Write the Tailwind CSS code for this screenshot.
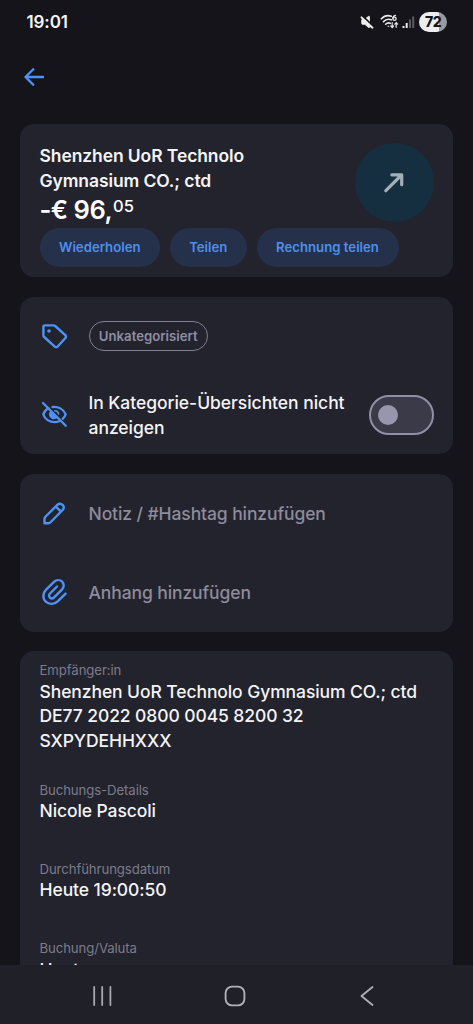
<!DOCTYPE html>
<html lang="de">
<head>
<meta charset="utf-8">
<meta name="viewport" content="width=device-width, initial-scale=1">
<title>Umsatzdetails</title>
<script src="https://cdn.jsdelivr.net/npm/@tailwindcss/browser@4"></script>
</head>
<body class="bg-[#15141a] font-['Inter',sans-serif] text-[#f4f4f6]">
<div class="flex h-[1024px] w-[473px] flex-col overflow-hidden">
  <!-- Status bar -->
  <header class="flex h-11 shrink-0 items-center justify-between pl-[26.500px] pr-[26px]">
    <span class="text-[17px] leading-none font-semibold tracking-[-0.100px]">19:01</span>
    <div class="flex items-center">
      <svg class="mr-[2px] h-[14px] w-[14px]" viewBox="0 0 16 16" fill="none"><path d="M2 5.300h2.600L9.800 1.600q1-.6 1 .5v11.800q0 1-1 .4L5.600 10.700H3Q2 10.700 2 9.700Z" fill="#eee" stroke="#eee"/><path d="M3.200 1.400 15.800 13.600" stroke="#15141a" stroke-width="2"/><path d="M1.700 2.700 14.200 14.500" stroke="#eee" stroke-width="2.200" stroke-linecap="round"/></svg>
      <svg class="ml-[4px] h-[16px] w-[20px]" viewBox="0 0 20 16" fill="none" stroke="#e8e8ea" stroke-width="1.600" stroke-linecap="round"><path d="M1.400 4.800C4 2 8 1.100 11.300 2.300M3.500 7.600C5.500 5.400 8.500 4.700 11.300 5.800M5.700 10.200C7 8.900 8.800 8.600 10.300 9.300"/><circle cx="8.400" cy="12.300" r=".8" fill="#e8e8ea" stroke="none"/><path d="M15.500 1.300C13.500 1.700 12.800 3 12.900 4.600" stroke-width="1.300"/><circle cx="14.500" cy="4.700" r="1.600" stroke-width="1.300"/><path d="M12.200 8.700v4.600M10.800 12l1.400 1.500 1.400-1.500M16.200 13.300V8.900M14.800 10.200l1.400-1.500 1.400 1.500" stroke-width="1.200"/></svg>
      <svg class="ml-[2px] h-[14px] w-[13px]" viewBox="0 0 13 14"><path d="M.5 11h2v2h-2zM3.700 8h2v5h-2z" fill="#e8e8ea"/><path d="M7 4.500h2V13H7zM10.200 1.500h2V13h-2z" fill="#5b5a60"/></svg>
      <div class="ml-[4px] flex h-[20px] w-[28px] items-center justify-center rounded-full bg-[linear-gradient(90deg,#ededef_72%,#9b9a9f_72%)] text-[14px] leading-none font-extrabold tracking-[-0.500px] text-[#15141a]">72</div>
    </div>
  </header>

  <!-- Top navigation -->
  <div class="flex h-[79.500px] shrink-0 items-start pt-[22.500px] pl-[24px]">
    <svg class="size-[20px]" viewBox="0 0 20 20" fill="none" stroke="#4d93f5" stroke-width="2.300" stroke-linecap="round" stroke-linejoin="round"><path d="M19.200 10H1.500M9.300 2.200 1.500 10l7.800 7.800"/></svg>
  </div>

  <main class="flex min-h-0 flex-1 flex-col gap-[19.700px] overflow-hidden px-[20px]">
    <!-- Payment summary -->
    <section class="flex h-[153.500px] shrink-0 flex-col rounded-[14px] bg-[#23232d] px-[19.500px] pt-[19.500px]">
      <div class="flex h-[85px] items-start justify-between">
        <div class="pt-[1px]">
          <h1 class="text-[17.500px] leading-[24.600px] font-semibold tracking-[-0.100px]"><span>Shenzhen UoR Technolo</span><br><span>Gymnasium CO.; ctd</span></h1>
          <p class="flex text-[25.500px] leading-[34px] font-semibold tracking-[-0.500px] text-white"><span>-€ 96,</span><span class="ml-[1px] text-[16.500px] leading-[26px] font-medium tracking-normal">05</span></p>
        </div>
        <div class="flex size-[79px] items-center justify-center rounded-full bg-[#152f40]">
          <svg class="size-[22px]" viewBox="0 0 22 22" fill="none" stroke="#a3aeb8" stroke-width="3.200" stroke-linecap="round" stroke-linejoin="round"><path d="M2.800 18.700 18.500 3M8.800 2.800h9.900v9.900"/></svg>
        </div>
      </div>
      <div class="flex gap-[9.500px] text-[13.200px] leading-none font-semibold text-[#4d8fec]">
        <button class="h-[39px] w-[120.500px] rounded-full bg-[#25304a]"><span>Wiederholen</span></button>
        <button class="h-[39px] w-[77.500px] rounded-full bg-[#25304a]"><span>Teilen</span></button>
        <button class="h-[39px] w-[142px] rounded-full bg-[#25304a]"><span>Rechnung teilen</span></button>
      </div>
    </section>

    <!-- Category -->
    <section class="flex h-[157.800px] shrink-0 flex-col rounded-[14px] bg-[#23232d] px-[19.500px]">
      <div class="flex h-[79px] items-center">
        <svg class="size-[29px]" viewBox="0 0 29 29" fill="none" stroke="#4d93f5" stroke-width="2.400" stroke-linejoin="round"><path d="M4.700 3.400H13.500q1 0 1.700.6L25.300 13.200q1.300 1.300.1 2.800L17.700 24.500q-1.400 1.400-2.900.1L4.200 15q-.8-.7-.8-1.700V4.700q0-1.300 1.300-1.300Z"/><circle cx="9" cy="9" r="1.800" fill="#4d93f5" stroke="none"/></svg>
        <span class="ml-[20px] flex h-[30px] w-[119.500px] items-center justify-center rounded-full border border-[#7f7f93] text-[13.200px] leading-none font-semibold text-[#8e8da3]"><span>Unkategorisiert</span></span>
      </div>
      <div class="flex h-[78px] items-center">
        <svg class="size-[29px]" viewBox="0 0 29 29" fill="none" stroke="#4d93f5" stroke-width="2.300" stroke-linecap="round"><path d="M8.600 8.300C6 9.400 4.100 11.600 3.300 14.400c1.700 4.900 6.300 7.800 11.300 7.800 1.700 0 3.300-.3 4.700-.9M12.500 7c5.800-.7 11 2.200 13.200 7.400-.7 1.700-1.700 3.200-3 4.400"/><path d="M10.200 10.900c-1.900 2.400-1.500 5.800 1.100 7.500 2 1.300 4.500 1 6.200-.3Z" fill="#4d93f5" stroke="none"/><path d="M14.800 10.700c2 .1 3.500 1.500 3.800 3.400" stroke-width="1.500"/><path d="M3 3 25.800 25.800"/></svg>
        <p class="ml-[20px] w-[272px] pt-[2px] text-[17.500px] leading-[24.600px] font-medium tracking-[-0.040px]"><span>In Kategorie-Übersichten nicht</span><br><span>anzeigen</span></p>
        <div class="ml-auto flex h-[40px] w-[65px] shrink-0 items-center rounded-full border-[2.500px] border-[#918fa5] bg-[#3a3a48] pl-[7.500px]"><div class="size-[20px] rounded-full bg-[#9896ad]"></div></div>
      </div>
    </section>

    <!-- Note and attachment -->
    <section class="flex h-[157.500px] shrink-0 flex-col rounded-[14px] bg-[#23232d] px-[19.500px] text-[17.500px] leading-none font-medium tracking-[-0.100px] text-[#8d8b9c]">
      <div class="flex h-[79px] items-center">
        <svg class="size-[29px]" viewBox="0 0 29 29" fill="none" stroke="#4d93f5" stroke-width="2.400" stroke-linejoin="round"><path d="M4.500 24.300v-4.600q0-1 .7-1.700L17.400 5.800q2.800-2.300 5.200 0 2.400 2.500 0 5.200L10.300 23.500q-.8.8-1.800.8ZM15.800 7.500l5.200 5.200"/></svg>
        <span class="ml-[20px]">Notiz / #Hashtag hinzufügen</span>
      </div>
      <div class="flex h-[78px] items-center pt-[1px]">
        <svg class="-mt-[2px] size-[29px]" viewBox="0 0 29 29" fill="none" stroke="#4d93f5" stroke-width="2.400" stroke-linecap="round"><path d="M25.600 16.600 18 24.100c-3.500 3.500-8.800 3.700-12.200.6s-3.200-8.500.3-12L14 4.900c2.400-2.300 5.900-2.400 8.100-.2s2.100 5.600-.2 7.900l-7.800 7.800c-1.300 1.300-3.100 1.300-4.200.2s-1.100-2.900.1-4.100l7-7"/></svg>
        <span class="ml-[20px]">Anhang hinzufügen</span>
      </div>
    </section>

    <!-- Booking details -->
    <dl class="flex h-[400px] shrink-0 flex-col rounded-t-[14px] bg-[#23232d] px-[19.500px] pt-[10px] text-[17.500px] leading-[24.600px] font-medium tracking-[-0.090px]">
      <dt class="h-[18.500px] text-[13.200px] leading-[18px] font-normal tracking-[-0.100px] text-[#7d7b8a]"><span>Empfänger:in</span></dt>
      <dd class="mb-[27.200px]"><span>Shenzhen UoR Technolo Gymnasium CO.; ctd</span><br><span>DE77 2022 0800 0045 8200 32</span><br><span>SXPYDEHHXXX</span></dd>
      <dt class="h-[18.500px] text-[13.200px] leading-[18px] font-normal tracking-[-0.100px] text-[#7d7b8a]"><span>Buchungs-Details</span></dt>
      <dd class="mb-[36px]"><span>Nicole Pascoli</span></dd>
      <dt class="h-[18.500px] text-[13.200px] leading-[18px] font-normal tracking-[-0.100px] text-[#7d7b8a]"><span>Durchführungsdatum</span></dt>
      <dd class="mb-[35.500px]"><span>Heute 19:00:50</span></dd>
      <dt class="h-[19px] text-[13.200px] leading-[18px] font-normal tracking-[-0.100px] text-[#7d7b8a]"><span>Buchung/Valuta</span></dt>
      <dd><span>Heute</span></dd>
    </dl>
  </main>

  <!-- System navigation -->
  <nav class="flex h-[59px] shrink-0 items-center justify-between bg-[#202028] pt-[3px] pr-[98px] pl-[92px]">
    <svg class="size-[20px]" viewBox="0 0 20 20" stroke="#a9a8ae" stroke-width="1.800" stroke-linecap="round"><path d="M2.200 1v18M10.200 1v18M18.400 1v18"/></svg>
    <svg class="-ml-[2px] size-[22px]" viewBox="0 0 22 22" fill="none" stroke="#b0afb5" stroke-width="1.900"><rect x="1.600" y="1.600" width="18.800" height="18.800" rx="6.500"/></svg>
    <svg class="h-[22px] w-[16px]" viewBox="0 0 16 22" fill="none" stroke="#b0afb5" stroke-width="1.800" stroke-linecap="round" stroke-linejoin="round"><path d="M13.500 2 2.500 11 13.500 20"/></svg>
  </nav>
</div>
</body>
</html>
